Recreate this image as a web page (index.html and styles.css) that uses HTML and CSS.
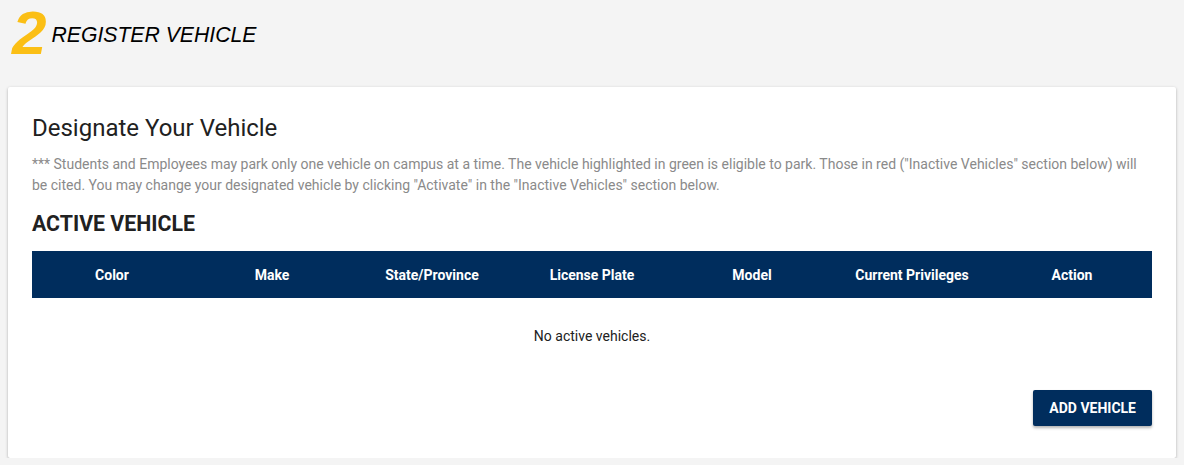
FILE: index.html
```html
<!DOCTYPE html>
<html>

	<head>
		<meta charset="UTF-8">
		<title>Register Vehicle</title>
		<link rel="stylesheet" href="styles.css">
	</head>

	<body>
		<div class="step">
			<span class="step-num">2</span>
			<span class="step-title">REGISTER VEHICLE</span>
		</div>

		<div class="card">
			<h2 class="card-title">Designate Your Vehicle</h2>
			<p class="note">*** Students and Employees may park only one vehicle on campus at a time. The vehicle highlighted in green is eligible to park. Those in red ("Inactive Vehicles" section below) will be cited. You may change your designated vehicle by clicking "Activate" in the "Inactive Vehicles" section below.</p>

			<h3 class="section-title">ACTIVE VEHICLE</h3>
			<table class="vehicles">
				<thead>
					<tr>
						<th>Color</th>
						<th>Make</th>
						<th>State/Province</th>
						<th>License Plate</th>
						<th>Model</th>
						<th>Current Privileges</th>
						<th>Action</th>
					</tr>
				</thead>
				<tbody>
					<tr>
						<td colspan="7" class="empty">No active vehicles.</td>
					</tr>
				</tbody>
			</table>

			<div class="actions">
				<button class="btn">ADD VEHICLE</button>
			</div>
		</div>
	</body>

</html>
```

FILE: styles.css
```css
* {
	margin: 0;
	padding: 0;
	box-sizing: border-box;
}

body {
	background-color: #f4f4f4;
	font-family: Roboto, "Noto Sans", sans-serif;
	color: #212121;
	padding: 0 8px;
}

.step {
	display: flex;
	align-items: flex-start;
	height: 87px;
	padding-left: 4px;
}

.step-num {
	font-family: "Liberation Sans", Arial, sans-serif;
	font-style: italic;
	font-weight: bold;
	font-size: 62px;
	line-height: 1;
	color: #fbbf15;
	margin-top: 2px;
}

.step-title {
	font-family: "Liberation Sans", Arial, sans-serif;
	font-style: italic;
	font-size: 21.2px;
	color: #000;
	margin-top: 23px;
	margin-left: 5px;
}

.card {
	background-color: #fff;
	border-radius: 2px;
	box-shadow: 0 1px 3px rgba(0, 0, 0, 0.3);
	padding: 25px 24px 32px;
}

.card-title {
	font-size: 24px;
	font-weight: normal;
	line-height: 32px;
	color: #212121;
}

.note {
	font-size: 14px;
	line-height: 21px;
	color: #8a8a8a;
	margin-top: 10px;
}

.section-title {
	font-size: 21.3px;
	font-weight: bold;
	line-height: 24px;
	margin-top: 16px;
	color: #212121;
}

.vehicles {
	width: 100%;
	border-collapse: collapse;
	table-layout: fixed;
	margin-top: 15px;
}

.vehicles th {
	background-color: #002d5d;
	color: #fff;
	font-size: 14px;
	font-weight: bold;
	height: 47px;
	text-align: center;
}

.empty {
	text-align: center;
	font-size: 14px;
	height: 76px;
	color: #212121;
}

.actions {
	display: flex;
	justify-content: flex-end;
	margin-top: 16px;
}

.btn {
	background-color: #002d5d;
	color: #fff;
	border: none;
	border-radius: 2px;
	font-family: Roboto, sans-serif;
	font-weight: bold;
	font-size: 14px;
	padding: 0 16px;
	height: 36px;
	box-shadow: 0 2px 3px rgba(0, 0, 0, 0.3);
}
```
